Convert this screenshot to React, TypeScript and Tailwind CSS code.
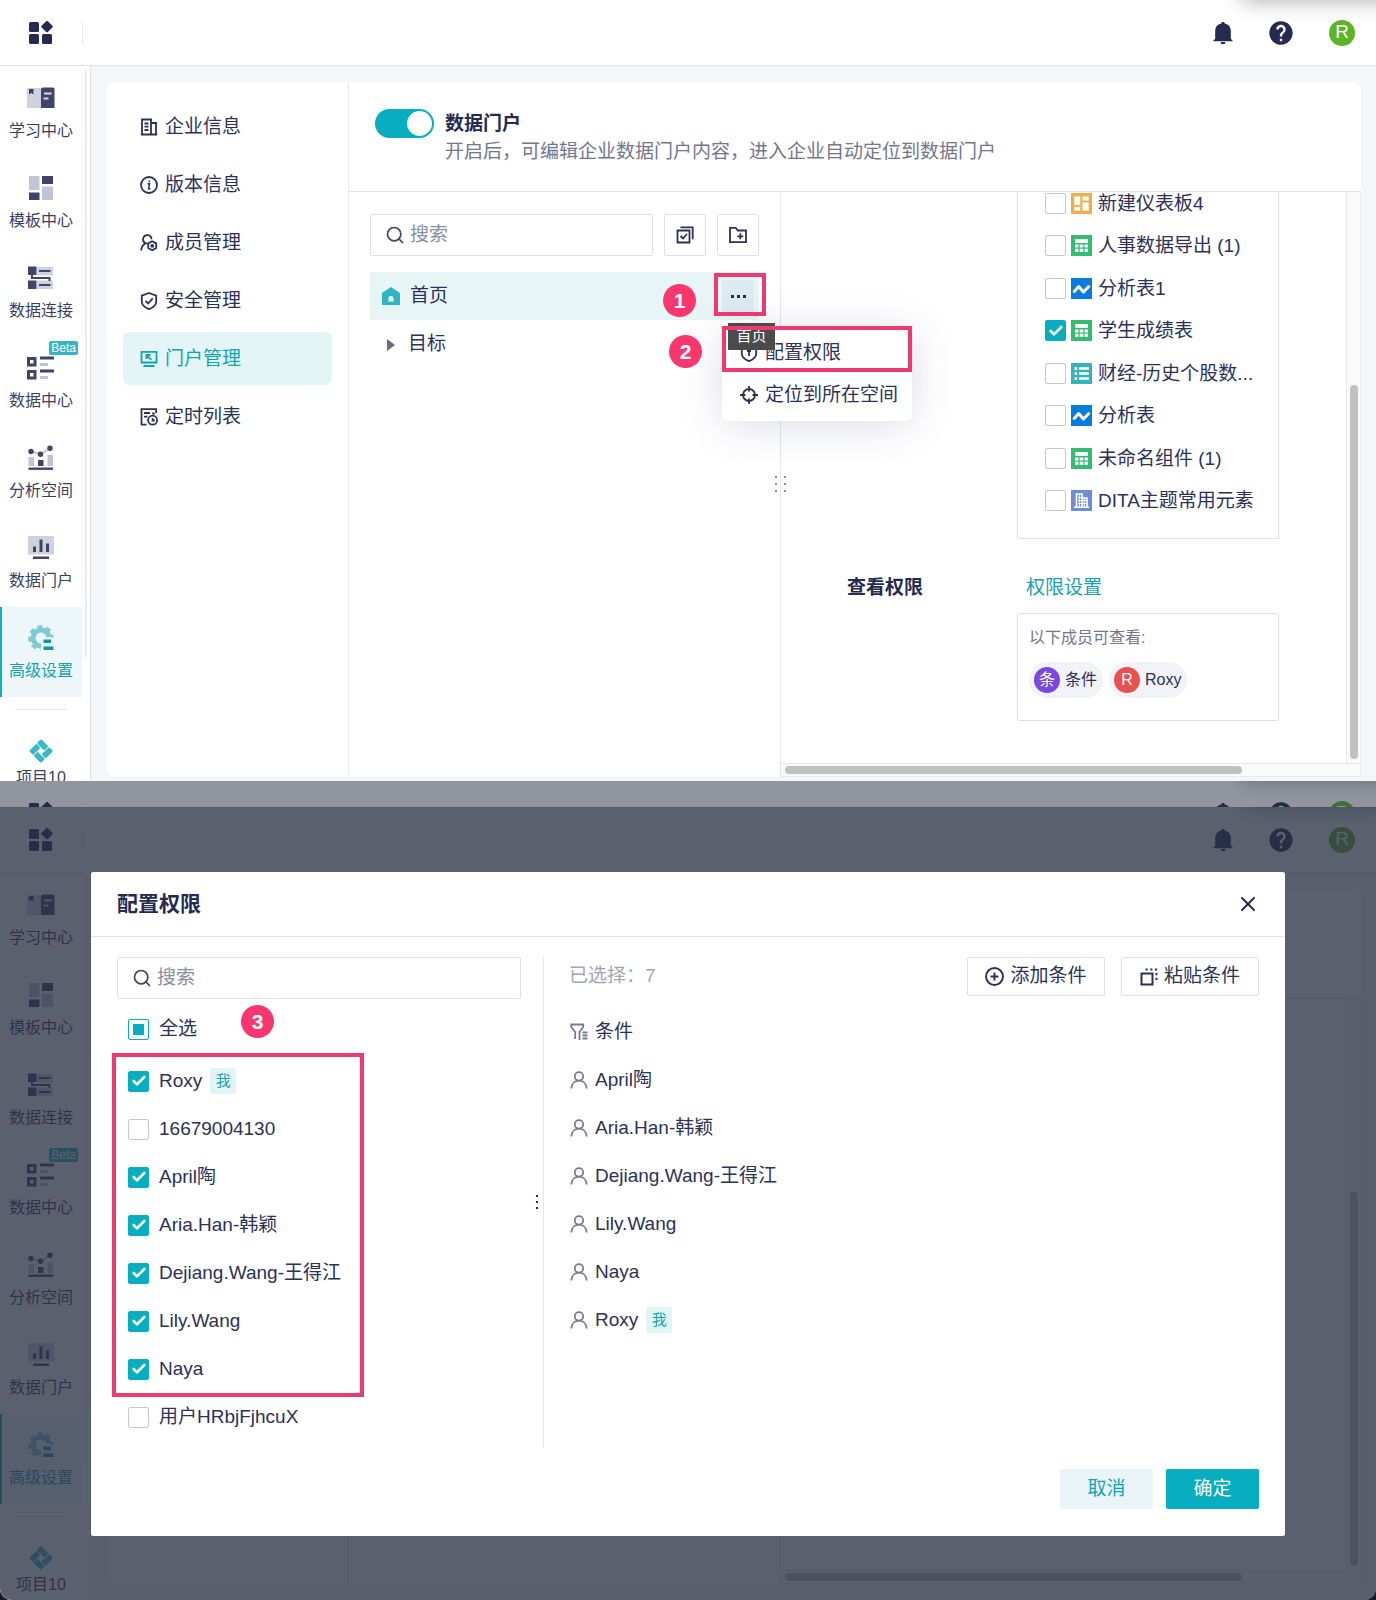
import type { ReactNode } from "react";
import clsx from "clsx";
import { Check, Search, X } from "lucide-react";
import { MdHelp } from "react-icons/md";

const NAVY = "#3f4468";
const PALE = "#d0d1de";

/* ---------- icons ---------- */

function LogoIcon() {
  return (
    <svg width="24" height="24" viewBox="0 0 24 24" fill="#242a50">
      <rect x="0" y="1" width="10" height="10" rx="1.5" />
      <rect x="0" y="13" width="10" height="10" rx="1.5" />
      <rect x="13" y="13" width="10" height="10" rx="1.5" />
      <rect x="13.6" y="1.2" width="8.8" height="8.8" rx="1.2" transform="rotate(45 18 5.6)" />
    </svg>
  );
}

function BellIcon() {
  return (
    <svg width="20" height="24" viewBox="0 0 20 24" fill="#242a50">
      <path d="M10 1c1 0 1.7.6 1.8 1.4C15.600 3.200 17.800 6 17.800 10v8L19.500 19.200v1H.5v-1L2.200 18v-8C2.200 6 4.400 3.200 8.200 2.400 8.300 1.600 9 1 10 1z" />
      <path d="M7.500 21h5a2.500 2.200 0 0 1-5 0z" />
    </svg>
  );
}

function LearnIcon() {
  return (
    <svg width="28" height="24" viewBox="0 0 28 24">
      <path d="M0 2h14v20H0z" fill={PALE} />
      <path d="M2 3h4.500v5.500L4.300 7 2 8.500z" fill={NAVY} />
      <path d="M16 1.500h10a1.500 1.500 0 0 1 1.500 1.500v19H14V3.500a2 2 0 0 1 2-2z" fill={NAVY} />
      <path d="M17 7.500h7.500M16.500 12.500h5" stroke="#dcdde8" strokeWidth="2" />
    </svg>
  );
}

function TemplateIcon() {
  return (
    <svg width="24" height="24" viewBox="0 0 24 24">
      <path d="M0 0h10.500v14H0zM13 10.500h11V24H13z" fill="#c3c4d3" />
      <path d="M13 0h11v8H13zM0 16.500h10.500V24H0z" fill={NAVY} />
    </svg>
  );
}

function ConnectIcon() {
  return (
    <svg width="26" height="24" viewBox="0 0 26 24">
      <path d="M9 1h16v8.500H9zM9 14.500h16V23H9z" fill={PALE} />
      <path d="M0 .5h8.500V9H0zM0 14.500h8.500V23H0z" fill={NAVY} />
      <path d="M11 5h11.500M11 19h11.500M4 8v4h17.500v3" stroke={NAVY} strokeWidth="2" fill="none" />
    </svg>
  );
}

function DataIcon() {
  return (
    <svg width="28" height="24" viewBox="0 0 28 24" fill="none">
      <path d="M1.500 2.500h6.500V9H1.500zM1.500 15.500h6.500V22H1.500z" stroke={NAVY} strokeWidth="3" />
      <path d="M13 2h14M13 15h14" stroke={NAVY} strokeWidth="3" />
      <path d="M13 8.500h8M13 21.500h8" stroke="#c3c4d3" strokeWidth="3" />
    </svg>
  );
}

function AnalysisIcon() {
  return (
    <svg width="26" height="26" viewBox="0 0 26 26">
      <path d="M.5 12h5.500v9H.5zM19.500 10H25v11h-5.500z" fill="#c3c4d3" />
      <path d="M10 15h5.500v6H10z" fill={NAVY} />
      <path d="M3 6l9.500 3.500L22 3" stroke="#c3c4d3" strokeWidth="2" fill="none" />
      <path d="M.5 23.700h24.500" stroke={NAVY} strokeWidth="2.400" />
      <circle cx="3" cy="6.500" r="2.700" fill={NAVY} />
      <circle cx="12.500" cy="9.300" r="2.700" fill={NAVY} />
      <circle cx="22" cy="3.200" r="2.700" fill={NAVY} />
    </svg>
  );
}

function PortalIcon() {
  return (
    <svg width="26" height="24" viewBox="0 0 26 24">
      <path d="M0 0h26v18.500H0z" fill={PALE} />
      <path d="M5 10.500h3V16H5zM11.500 3.500h3V16h-3zM18 7.500h3V16h-3zM5 20.500h16V23H5z" fill={NAVY} />
    </svg>
  );
}

function GearIcon() {
  return (
    <svg width="26" height="26" viewBox="0 0 26 26">
      <g fill="none" stroke="#7ccbd4">
        <path d="M21 12A8 8 0 1 0 13 21" strokeWidth="5" />
        <path d="M24.300 12.500A11.300 11.300 0 1 0 12.500 24.300" strokeWidth="3" strokeDasharray="5 3.870" strokeDashoffset="2" />
      </g>
      <path d="M15.500 14.500h7.500v3.500h-7.500zM15.500 21.500H25.500V25h-10z" fill="#0d96a5" />
    </svg>
  );
}

function ProjectIcon() {
  return (
    <svg width="24" height="24" viewBox="0 0 24 24" fill="#38bac6">
      <g transform="rotate(45 12 12)">
        <rect x="3.500" y="3.500" width="10.500" height="5.800" rx="1.500" />
        <rect x="14.800" y="3.500" width="5.800" height="10.500" rx="1.500" />
        <rect x="10" y="14.800" width="10.500" height="5.800" rx="1.500" />
        <rect x="3.500" y="10" width="5.800" height="10.500" rx="1.500" />
      </g>
    </svg>
  );
}

function LineIcon({ children, size = 18 }: { children: ReactNode; size?: number }) {
  return (
    <svg
      className="shrink-0"
      width={size}
      height={size}
      viewBox="0 0 18 18"
      fill="none"
      stroke="currentColor"
      strokeWidth="1.800"
    >
      {children}
    </svg>
  );
}

const CompanyIcon = () => (
  <LineIcon>
    <path d="M2 16.500V1.500h9v15M11 5h5v11.500M.8 16.500h16.400M4.500 5.500h4M4.500 8.700h4M4.500 12h4" />
  </LineIcon>
);
const VersionIcon = () => (
  <LineIcon>
    <circle cx="9" cy="9" r="8" />
    <path d="M7.500 7.800h2l-1 5h2M9.300 4.500v1.800" strokeWidth="1.500" />
  </LineIcon>
);
const MemberIcon = () => (
  <LineIcon>
    <path d="M11.500 5.300a4.200 4.200 0 1 0-5.500 4C3 10.300 1.500 12.800 1.200 16.500" />
    <path d="M12.200 7.200l4 2.200v4.600l-4 2.300-4-2.300V9.400z" />
    <circle cx="12.200" cy="11.800" r="1" />
  </LineIcon>
);
const SafeIcon = () => (
  <LineIcon>
    <path d="M9 1l7.200 2.600v6c0 3.400-3 6-7.200 7.600-4.200-1.600-7.200-4.200-7.200-7.600v-6z" />
    <path d="M5.500 8.800l2.700 2.700 4.500-5.200" />
  </LineIcon>
);
const GateIcon = () => (
  <LineIcon>
    <path d="M1.500 1.800h15v10.700h-15zM3.500 16h11M6.500 9V5h4M6.800 5.300l4.500 4.500" />
  </LineIcon>
);
const TimerIcon = () => (
  <LineIcon>
    <path d="M16.200 5V1.200H1.500v15.500h5M4 5h6M4 8.700h3.500M12.200 5.500h2.600" />
    <circle cx="12.600" cy="12.200" r="4.500" />
    <path d="M12.600 10v2.500h2.200" />
  </LineIcon>
);
const UserIcon = () => (
  <LineIcon>
    <circle cx="9" cy="5.400" r="4.200" />
    <path d="M1.300 17.500C1.600 12.800 4.800 9.700 9 9.700s7.400 3.100 7.700 7.800" />
  </LineIcon>
);
const FilterIcon = () => (
  <LineIcon>
    <path d="M5.200 16V9L1.200 4V1.500h12V4L9.500 9v8M12.500 9.500h5M12.500 12.500h5M12.500 15.500h5" />
  </LineIcon>
);
const TargetIcon = () => (
  <LineIcon>
    <circle cx="9" cy="9" r="6" />
    <path d="M9 0v5.500M9 12.500V18M0 9h5.500M12.500 9H18" />
  </LineIcon>
);
const ShieldLockIcon = () => (
  <LineIcon>
    <path d="M9 1l7.200 2.600v6c0 3.400-3 6-7.200 7.600-4.200-1.600-7.200-4.200-7.200-7.600v-6z" />
    <path d="M9 7v5M7 7h4" />
  </LineIcon>
);
const BatchIcon = () => (
  <LineIcon>
    <path d="M1.500 4.500h12v12h-12zM4.500 1.300h12.200v12M4.500 10l2.500 2.500 4-4.500" />
  </LineIcon>
);
const FolderPlusIcon = () => (
  <LineIcon>
    <path d="M1 1.800h5.800l2 2.700H17v11.700H1zM11.300 7.300v6M8.300 10.300h6" />
  </LineIcon>
);
const AddIcon = () => (
  <LineIcon size={19}>
    <circle cx="9" cy="9" r="8" />
    <path d="M9 5.200v7.600M5.200 9h7.600" />
  </LineIcon>
);
const PasteIcon = () => (
  <LineIcon>
    <path d="M1.500 5.500h11v11h-11z" strokeWidth="2" />
    <path d="M5.500 1.500h12" strokeDasharray="2.200 2.500" strokeWidth="2" />
    <path d="M16.500 5v8" strokeDasharray="2.200 2.500" strokeWidth="2" />
  </LineIcon>
);

function HomeIcon() {
  return (
    <svg className="shrink-0" width="18" height="18" viewBox="0 0 18 18">
      <path d="M9 0l8.300 5.400c.4.300.7.700.7 1.200V18H0V6.600c0-.5.300-.9.700-1.200z" fill="#2fb6c1" />
      <path d="M6.500 14.500v-3a2.500 2.500 0 0 1 5 0v3z" fill="#fff" />
    </svg>
  );
}

type Kind = "board" | "table" | "chart" | "list" | "building";

function KindIcon({ kind }: { kind: Kind }) {
  return (
    <svg className="shrink-0" width="21" height="21" viewBox="0 0 21 21">
      {kind === "board" && (
        <>
          <path d="M0 0h21v21H0z" fill="#f2ae49" />
          <path d="M3.300 3.500h6V12h-6zM3.300 13.800h6v4h-6zM11.500 3.500h6.200v4h-6.200zM11.500 9.500h6.200v8.300h-6.200z" fill="#fff" />
        </>
      )}
      {kind === "table" && (
        <>
          <path d="M0 0h21v21H0z" fill="#33bd70" />
          <path d="M4 4h13v4H4zM4 9.500h3.500v3H4zM8.700 9.500h3.600v3H8.700zM13.500 9.500H17v3h-3.500zM4 13.800h3.500V17H4zM8.700 13.800h3.600V17H8.700zM13.500 13.800H17V17h-3.500z" fill="#fff" />
        </>
      )}
      {kind === "chart" && (
        <>
          <path d="M0 0h21v21H0z" fill="#067ce0" />
          <path d="M3.200 13.500l4.500-5 4.800 5.500 5.200-5.500" stroke="#fff" strokeWidth="3" strokeLinecap="round" strokeLinejoin="round" fill="none" />
        </>
      )}
      {kind === "list" && (
        <>
          <path d="M0 0h21v21H0z" fill="#36b3b7" />
          <path d="M3.500 5.500h2.700M8 5.500h10M3.500 10.500h2.700M8 10.500h10M3.500 15.500h2.700M8 15.500h10" stroke="#fff" strokeWidth="2.400" />
        </>
      )}
      {kind === "building" && (
        <>
          <path d="M0 0h21v21H0z" fill="#6b8ed6" />
          <path d="M3 17.200h15M5.500 17V4h5.500v13M11 8h5v9" stroke="#fff" strokeWidth="1.600" fill="none" />
          <path d="M7 7.500h3M7 10.500h9M7 13.500h9M13.300 8v9M8.300 4v13" stroke="#fff" strokeWidth="1" />
        </>
      )}
    </svg>
  );
}

/* ---------- small controls ---------- */

function Checkbox({ checked, partial, label }: { checked?: boolean; partial?: boolean; label: string }) {
  return (
    <span className="grid size-[21px] shrink-0 place-items-center">
      <input
        type="checkbox"
        aria-label={label}
        defaultChecked={checked}
        className={clsx(
          "peer col-start-1 row-start-1 size-[21px] appearance-none rounded-xs border bg-white checked:border-[#08adc0] checked:bg-[#08adc0]",
          partial ? "border-[#08adc0]" : "border-[#c6c7d0]"
        )}
      />
      {partial && <span className="pointer-events-none col-start-1 row-start-1 size-[11px] bg-[#08adc0]" />}
      <Check
        className="pointer-events-none col-start-1 row-start-1 hidden size-4 text-white peer-checked:block"
        strokeWidth={4}
      />
    </span>
  );
}

function SearchBox() {
  return (
    <label className="flex h-[42px] flex-1 items-center gap-[5px] rounded-xs border border-[#dfe0e6] px-[14px]">
      <Search className="size-5 shrink-0 text-[#3f4468]" strokeWidth={2} />
      <input
        type="text"
        aria-label="搜索"
        placeholder="搜索"
        className="w-full min-w-0 bg-transparent text-[19px] outline-none placeholder:text-[#8c8ea3]"
      />
    </label>
  );
}

function Step({ n, className }: { n: number; className: string }) {
  return (
    <span
      className={clsx(
        "absolute z-10 flex size-[33px] items-center justify-center rounded-full bg-[#f9376e] text-[21px] font-bold text-white",
        className
      )}
    >
      {n}
    </span>
  );
}

function MeTag() {
  return (
    <span className="ml-2 flex size-[26px] items-center justify-center rounded-xs bg-[#e1f5f6] text-[15px] text-[#12a3b2]">
      我
    </span>
  );
}

/* ---------- shell ---------- */

function TopBar() {
  return (
    <header className="relative flex h-[66px] items-center justify-between overflow-hidden border-b border-[#e3e4e9] bg-white pr-[21px] pl-[29px]">
      <div className="absolute -top-10 -right-4 h-9 w-[150px] rounded-xl shadow-[0_2px_20px_4px_rgba(0,0,0,0.3)]" />
      <div className="flex items-center gap-[29px]">
        <a href="#apps" aria-label="应用">
          <LogoIcon />
        </a>
        <span className="h-[22px] w-px bg-[#e6e7eb]" />
      </div>
      <div className="flex items-center">
        <button type="button" aria-label="通知">
          <BellIcon />
        </button>
        <button type="button" aria-label="帮助" className="ml-[34px]">
          <MdHelp className="size-7 text-[#242a50]" />
        </button>
        <span className="ml-[34px] flex size-[26px] items-center justify-center rounded-full bg-[#5cb429] text-[19px] text-white">
          R
        </span>
      </div>
    </header>
  );
}

const navItems = [
  { icon: LearnIcon, label: "学习中心" },
  { icon: TemplateIcon, label: "模板中心" },
  { icon: ConnectIcon, label: "数据连接" },
  { icon: DataIcon, label: "数据中心", beta: true },
  { icon: AnalysisIcon, label: "分析空间" },
  { icon: PortalIcon, label: "数据门户" },
  { icon: GearIcon, label: "高级设置", active: true },
];

function SideNav() {
  return (
    <aside className="flex w-[91px] shrink-0 overflow-hidden border-r border-[#e3e4e9] bg-white contain-size">
      <nav className="w-[82px] pt-px">
        {navItems.map((item) => (
          <a
            key={item.label}
            href="#nav"
            className={clsx(
              "relative flex h-[90px] flex-col items-center pt-[18px]",
              item.active
                ? "bg-[#edf7f9] text-[#12a3b2] before:absolute before:inset-y-0 before:left-0 before:w-0.5 before:bg-[#12b0bf]"
                : "text-[#3a3f62]"
            )}
          >
            <span className="flex h-[26px] items-center">
              <item.icon />
            </span>
            <span className="mt-2 text-base leading-6">{item.label}</span>
            {item.beta && (
              <span className="absolute top-1 right-1 rounded-xs bg-[#34b7c3] px-[2px] text-[12px] leading-[14px] font-medium text-white">
                Beta
              </span>
            )}
          </a>
        ))}
        <div className="mx-[15px] mt-3 h-px bg-[#e6e7eb]" />
        <a href="#project" className="mt-[29px] flex flex-col items-center text-[#3a3f62]">
          <ProjectIcon />
          <span className="mt-[3px] text-base leading-6">项目10</span>
        </a>
      </nav>
      <div className="mt-[3px] ml-[3px] h-[588px] w-0.5 bg-[#ededef]" />
    </aside>
  );
}

function Screen({ children }: { children: ReactNode }) {
  return (
    <div className="flex flex-1 flex-col bg-[#f5f6f9]">
      <TopBar />
      <div className="flex flex-1">
        <SideNav />
        <main className="flex min-w-0 flex-1 py-4 pr-[15px] pl-4">{children}</main>
      </div>
    </div>
  );
}

interface WorkspaceProps {
  menu?: ReactNode;
  head?: ReactNode;
  tree?: ReactNode;
  detail?: ReactNode;
}

function Workspace({ menu, head, tree, detail }: WorkspaceProps) {
  return (
    <div className="flex min-w-0 flex-1 rounded-lg bg-white">
      <div className="w-[242px] shrink-0 border-r border-[#e6e7eb]">{menu}</div>
      <div className="flex min-w-0 flex-1 flex-col">
        <div className="min-h-[110px] border-b border-[#e3e4e9]">{head}</div>
        <div className="flex flex-1">
          <div className="relative w-[432px] shrink-0 border-r border-[#e6e7eb]">{tree}</div>
          <div className="flex min-w-0 flex-1 flex-col border-r border-[#ececec]">
            <div className="flex flex-1">
              <div className="min-w-0 flex-1">{detail}</div>
              <div className="flex w-[14px] flex-col items-center justify-end border-l border-[#e8e8e8] bg-[#fafafa] pb-1">
                <div className="h-[374px] w-2 rounded-full bg-[#c1c1c1]" />
              </div>
            </div>
            <div className="flex h-[14px] items-center border-t border-b border-[#e8e8e8] bg-[#fafafa] pr-[118px] pl-1">
              <div className="h-2 flex-1 rounded-full bg-[#c1c1c1]" />
            </div>
          </div>
        </div>
      </div>
    </div>
  );
}

/* ---------- portal management ---------- */

const menuItems = [
  { icon: CompanyIcon, label: "企业信息" },
  { icon: VersionIcon, label: "版本信息" },
  { icon: MemberIcon, label: "成员管理" },
  { icon: SafeIcon, label: "安全管理" },
  { icon: GateIcon, label: "门户管理", active: true },
  { icon: TimerIcon, label: "定时列表" },
];

function SettingsMenu() {
  return (
    <nav className="flex flex-col gap-[5px] px-4 pt-[18px]">
      {menuItems.map((item) => (
        <a
          key={item.label}
          href="#menu"
          className={clsx(
            "flex h-[53px] items-center rounded-md pt-px pl-[17px] text-[19px]",
            item.active ? "bg-[#e3f5f6] text-[#12a3b2]" : "text-[#2b3158]"
          )}
        >
          <span className="flex w-[25px]">
            <item.icon />
          </span>
          {item.label}
        </a>
      ))}
    </nav>
  );
}

function PortalHead() {
  return (
    <div className="flex gap-[11px] pt-[27px] pl-[26px]">
      <input
        type="checkbox"
        role="switch"
        defaultChecked
        aria-label="数据门户"
        className="h-[29px] w-[59px] shrink-0 appearance-none rounded-full bg-[#b9bac6] p-0.5 before:block before:size-[25px] before:rounded-full before:bg-white checked:bg-[#08adc0] checked:before:ml-[30px]"
      />
      <div className="pt-px text-[19px] leading-7">
        <h1 className="font-semibold text-[#242a50]">数据门户</h1>
        <p className="text-[#73768c]">开启后，可编辑企业数据门户内容，进入企业自动定位到数据门户</p>
      </div>
    </div>
  );
}

function RowMenu() {
  return (
    <div className="absolute top-[55px] right-[-153px] z-20 w-[190px] rounded-md bg-white pt-[5px] pb-[5px] shadow-[0_4px_40px_rgba(60,66,110,0.18)]">
      <button type="button" className="flex h-[42px] w-full items-center gap-[7px] pl-[18px] text-[19px]">
        <ShieldLockIcon />
        配置权限
      </button>
      <button type="button" className="flex h-[42px] w-full items-center gap-[7px] pl-[18px] text-[19px] whitespace-nowrap">
        <TargetIcon />
        定位到所在空间
      </button>
      <span className="absolute -top-1 left-1.5 flex h-[27px] w-[47px] items-center justify-center bg-[#4b4b4b] text-[15px] text-white">
        首页
      </span>
      <span className="absolute inset-x-0 -top-px h-[46px] border-4 border-[#ee3a70]" />
      <Step n={2} className="top-2 -left-[53px]" />
    </div>
  );
}

function PortalTree() {
  return (
    <div className="pt-[22px] pr-[21px] pl-[21px] text-[#2b3158]">
      <div className="flex gap-[11px]">
        <SearchBox />
        <button
          type="button"
          aria-label="批量选择"
          className="flex size-[42px] items-center justify-center rounded-xs border border-[#dfe0e6]"
        >
          <BatchIcon />
        </button>
        <button
          type="button"
          aria-label="新建文件夹"
          className="flex size-[42px] items-center justify-center rounded-xs border border-[#dfe0e6]"
        >
          <FolderPlusIcon />
        </button>
      </div>
      <ul className="mt-4 text-[19px]">
        <li className="relative flex h-12 items-center bg-[#e8f5f7] pr-[5px] pl-3">
          <HomeIcon />
          <span className="ml-[10px] flex-1 pt-px">首页</span>
          <button
            type="button"
            aria-label="更多"
            className="flex size-8 items-center justify-center gap-[3px] bg-[#deeaf1]"
          >
            <i className="size-[3px] bg-[#242a50]" />
            <i className="size-[3px] bg-[#242a50]" />
            <i className="size-[3px] bg-[#242a50]" />
          </button>
          <span className="absolute top-px -right-[7px] h-[43px] w-[52px] border-4 border-[#ee3a70]" />
          <Step n={1} className="top-3 right-[63px]" />
          <RowMenu />
        </li>
        <li className="flex h-12 items-center gap-[13px] pt-px pl-[17px]">
          <svg width="8" height="12" viewBox="0 0 8 12" fill="#686b84">
            <path d="M0 0l8 6-8 6z" />
          </svg>
          目标
        </li>
      </ul>
      <div className="absolute top-[284px] -right-[6px] grid grid-cols-2 gap-x-[7px] gap-y-[5px]">
        {[0, 1, 2, 3, 4, 5].map((i) => (
          <i key={i} className="size-0.5 bg-[#8a8c9c]" />
        ))}
      </div>
    </div>
  );
}

const resources: { kind: Kind; name: string; checked?: boolean }[] = [
  { kind: "board", name: "新建仪表板4" },
  { kind: "table", name: "人事数据导出 (1)" },
  { kind: "chart", name: "分析表1" },
  { kind: "table", name: "学生成绩表", checked: true },
  { kind: "list", name: "财经-历史个股数..." },
  { kind: "chart", name: "分析表" },
  { kind: "table", name: "未命名组件 (1)" },
  { kind: "building", name: "DITA主题常用元素" },
];

function PortalDetail() {
  return (
    <div className="flex items-end pb-[42px] pl-[66px] text-[19px]">
      <h2 className="mb-[119px] w-[170px] shrink-0 leading-7 font-semibold text-[#242a50]">查看权限</h2>
      <div className="w-[262px] shrink-0">
        <div className="rounded-b-xs border-x border-b border-[#dfe0e6] pt-px pb-[27px] pl-[27px]">
          <ul className="flex h-[318px] flex-col justify-between text-[#2b3158]">
            {resources.map((item) => (
              <li key={item.name}>
                <label className="flex h-[21px] items-center leading-[21px] whitespace-nowrap">
                  <Checkbox checked={item.checked} label={item.name} />
                  <span className="mr-1.5 ml-[5px]">
                    <KindIcon kind={item.kind} />
                  </span>
                  {item.name}
                </label>
              </li>
            ))}
          </ul>
        </div>
        <a href="#permission" className="mt-[35px] ml-[9px] block leading-7 text-[#12a3b2]">
          权限设置
        </a>
        <div className="mt-[11px] rounded-xs border border-[#dfe0e6] px-[11px] pt-3 pb-[22px] text-base">
          <p className="leading-6 text-[#73768c]">以下成员可查看:</p>
          <div className="mt-3 flex gap-1.5 text-[#2b3158]">
            <span className="flex h-9 items-center gap-[5px] rounded-full bg-[#f2f3f8] pr-1.5 pl-[5px]">
              <i className="flex size-[26px] items-center justify-center rounded-full bg-[#7a48e0] text-white not-italic">
                条
              </i>
              条件
            </span>
            <span className="flex h-9 items-center gap-[5px] rounded-full bg-[#f2f3f8] pr-1.5 pl-[5px]">
              <i className="flex size-[26px] items-center justify-center rounded-full bg-[#e9504e] text-white not-italic">
                R
              </i>
              Roxy
            </span>
          </div>
        </div>
      </div>
    </div>
  );
}

/* ---------- permission dialog ---------- */

const members = [
  { name: "Roxy", checked: true, me: true },
  { name: "16679004130" },
  { name: "April陶", checked: true },
  { name: "Aria.Han-韩颖", checked: true },
  { name: "Dejiang.Wang-王得江", checked: true },
  { name: "Lily.Wang", checked: true },
  { name: "Naya", checked: true },
];

const selected = [
  { name: "条件", condition: true },
  { name: "April陶" },
  { name: "Aria.Han-韩颖" },
  { name: "Dejiang.Wang-王得江" },
  { name: "Lily.Wang" },
  { name: "Naya" },
  { name: "Roxy", me: true },
];

function PermissionDialog() {
  return (
    <section
      role="dialog"
      aria-label="配置权限"
      className="z-10 col-start-1 row-start-1 mx-[91px] mt-[65px] mb-16 rounded-xs bg-white text-[19px] text-[#2b3158]"
    >
      <div className="flex h-[65px] items-center justify-between border-b border-[#e3e4e9] pr-[25px] pl-[26px]">
        <h2 className="text-[21px] font-semibold text-[#242a50]">配置权限</h2>
        <button type="button" aria-label="关闭">
          <X className="size-6 text-[#242a50]" strokeWidth={2} />
        </button>
      </div>

      <div className="mt-5 flex min-h-[491px]">
        <div className="relative w-[453px] shrink-0 border-r border-[#e6e7eb] pr-[22px] pl-[21px]">
          <div className="flex pl-[5px]">
            <SearchBox />
          </div>
          <label className="mt-1.5 flex h-12 items-center gap-[10px] pl-4">
            <Checkbox partial label="全选" />
            全选
          </label>
          <Step n={3} className="top-12 left-[150px]" />
          <ul className="w-[252px] border-4 border-[#ee3a70] pl-3">
            {members.map((m) => (
              <li key={m.name}>
                <label className="flex h-12 items-center">
                  <Checkbox checked={m.checked} label={m.name} />
                  <span className="ml-[10px]">{m.name}</span>
                  {m.me && <MeTag />}
                </label>
              </li>
            ))}
          </ul>
          <label className="flex h-10 items-center gap-[10px] pl-4">
            <Checkbox label="用户HRbjFjhcuX" />
            用户HRbjFjhcuX
          </label>
          <div className="absolute top-[238px] right-[5px] flex flex-col gap-1">
            <i className="size-0.5 bg-[#242a50]" />
            <i className="size-0.5 bg-[#242a50]" />
            <i className="size-0.5 bg-[#242a50]" />
          </div>
        </div>

        <div className="min-w-0 flex-1 pr-[26px] pl-[25px]">
          <div className="flex items-center gap-4">
            <p className="flex-1 text-[#a3a5b5]">已选择：7</p>
            <button
              type="button"
              className="flex h-[39px] w-[138px] items-center justify-center gap-1.5 rounded-xs border border-[#dfe0e6]"
            >
              <AddIcon />
              添加条件
            </button>
            <button
              type="button"
              className="flex h-[39px] w-[138px] items-center justify-center gap-1.5 rounded-xs border border-[#dfe0e6]"
            >
              <PasteIcon />
              粘贴条件
            </button>
          </div>
          <ul className="mt-3">
            {selected.map((item) => (
              <li key={item.name} className="flex h-12 items-center">
                <span className="mr-[7px] ml-px text-[#777a92]">
                  {item.condition ? <FilterIcon /> : <UserIcon />}
                </span>
                {item.name}
                {item.me && <MeTag />}
              </li>
            ))}
          </ul>
        </div>
      </div>

      <div className="flex justify-end gap-[13px] pt-[21px] pr-[26px] pb-[27px]">
        <button type="button" className="h-10 w-[93px] rounded-xs bg-[#e9f5f8] text-[#12a3b2]">
          取消
        </button>
        <button type="button" className="h-10 w-[93px] rounded-xs bg-[#08adc0] text-white">
          确定
        </button>
      </div>
    </section>
  );
}

export default function App() {
  return (
    <div className="flex min-h-screen flex-col bg-[#1b1b1f] font-['Liberation_Sans','Noto_Sans_CJK_SC',sans-serif]">
      <section className="flex flex-col">
        <Screen>
          <Workspace
            menu={<SettingsMenu />}
            head={<PortalHead />}
            tree={<PortalTree />}
            detail={<PortalDetail />}
          />
        </Screen>
      </section>

      <div className="relative z-30 -mt-3 h-[26px] overflow-hidden" aria-hidden="true">
        <TopBar />
        <div className="absolute inset-0 bg-[#242c3c]/50" />
      </div>

      <section className="grid flex-1 overflow-hidden rounded-b-xl">
        <div className="relative col-start-1 row-start-1 flex">
          <Screen>
            <Workspace />
          </Screen>
          <div className="absolute inset-0 bg-[#2a3043]/77" />
        </div>
        <PermissionDialog />
      </section>
    </div>
  );
}
